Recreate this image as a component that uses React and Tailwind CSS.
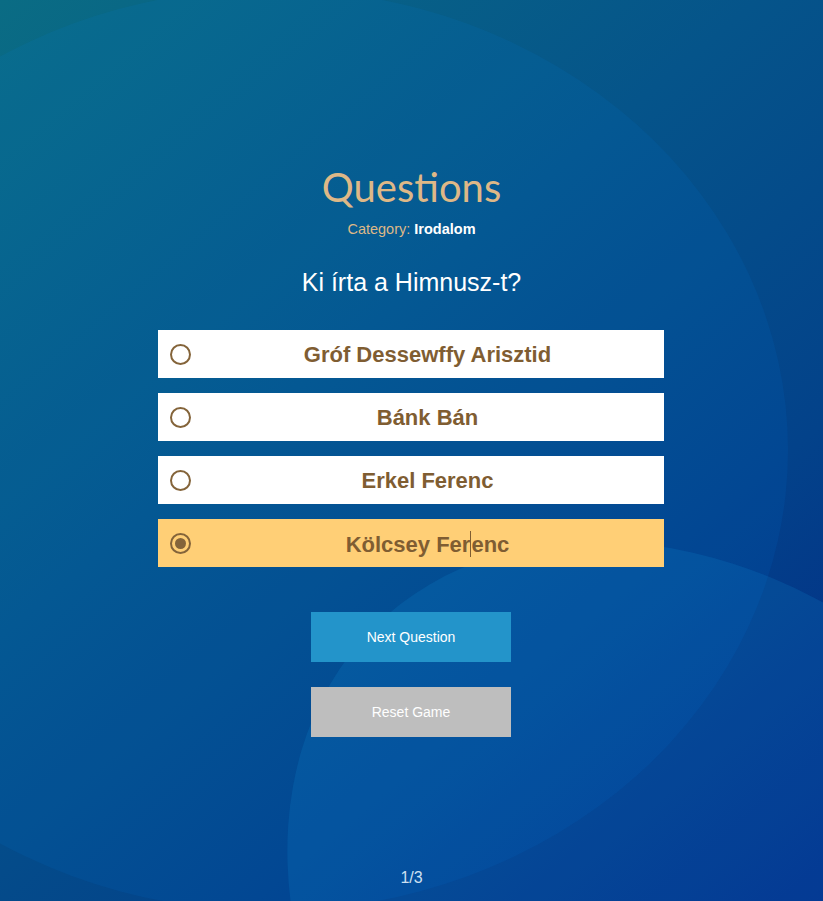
import { useState } from "react";

const OPTIONS = ["Gróf Dessewffy Arisztid", "Bánk Bán", "Erkel Ferenc", "Kölcsey Ferenc"];

function Radio({ checked }) {
  return (
    <span className="ml-3 grid h-[21px] w-[21px] shrink-0 place-items-center rounded-full border-2 border-[#84643a]">
      {checked && <span className="h-[11px] w-[11px] rounded-full bg-[#84643a]" />}
    </span>
  );
}

export default function App() {
  const [picked, setPicked] = useState(3);

  return (
    <div className="relative flex min-h-screen flex-col items-center overflow-hidden bg-[linear-gradient(140deg,#0a6c84_0%,#05548a_40%,#03428a_70%,#022886_100%)] font-['Liberation_Sans',Arial,sans-serif]">
      {/* background blobs */}
      <div className="pointer-events-none absolute left-[-248px] top-[-11px] h-[922px] w-[1036px] rounded-[50%] bg-[rgba(0,140,255,0.08)]" />
      <div className="pointer-events-none absolute left-[236px] top-[600px] h-[720px] w-[940px] rotate-45 rounded-[50%] bg-[rgba(20,150,220,0.17)]" />

      <h1 className="relative mt-[163px] font-['Lato',sans-serif] text-[40px] font-normal leading-[48px] text-[#deb887]">Questions</h1>
      <p className="relative mt-2 text-[14.5px] leading-5 text-[#deb887]">
        Category: <span className="font-bold text-white">Irodalom</span>
      </p>
      <h2 className="relative mt-[27px] text-[25px] leading-8 text-white">Ki írta a Himnusz-t?</h2>

      <div className="relative mr-px mt-[32px] flex w-[506px] flex-col gap-[15px]">
        {OPTIONS.map((o, i) => (
          <label
            key={o}
            onClick={() => setPicked(i)}
            className={`flex h-12 cursor-pointer items-center ${picked === i ? "bg-[#ffcf76]" : "bg-white"}`}
          >
            <Radio checked={picked === i} />
            <span className="flex-1 text-center text-[22px] font-bold text-[#7f5d32]">
              {i === 3 ? (
                <>
                  Kölcsey Fer<span className="inline-block h-[26px] w-px translate-y-[5px] bg-[#7f5d32]" />enc
                </>
              ) : (
                o
              )}
            </span>
          </label>
        ))}
      </div>

      <button className="relative mr-px mt-[45px] h-[50px] w-[200px] bg-[#2394ca] text-[14px] text-white">Next Question</button>
      <button className="relative mr-px mt-[25px] h-[50px] w-[200px] bg-[#bebebe] text-[14px] text-white">Reset Game</button>

      <div className="relative mt-auto pb-[11px] text-[16px] leading-6 text-[#cde0f2]">1/3</div>
    </div>
  );
}
